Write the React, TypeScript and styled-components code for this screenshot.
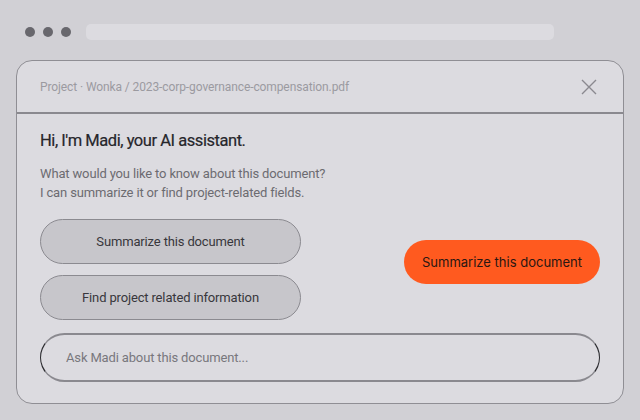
import React from "react";
import styled, { createGlobalStyle } from "styled-components";

const Global = createGlobalStyle`
  html, body { margin: 0; padding: 0; }
  body {
    background: #d1d0d5;
    font-family: Roboto, "Noto Sans", sans-serif;
    width: 640px;
    height: 420px;
    overflow: hidden;
  }
`;

const Page = styled.div`
  width: 640px;
  height: 420px;
  display: flex;
  flex-direction: column;
  box-sizing: border-box;
  padding: 24px 16px 0;
`;

const BrowserBar = styled.div`
  display: flex;
  align-items: center;
  height: 16px;
  padding-left: 9px;
`;

const Dot = styled.span`
  width: 10px;
  height: 10px;
  border-radius: 50%;
  background: #68676d;
  margin-right: 8px;
`;

const Address = styled.div`
  margin-left: 7px;
  width: 468px;
  height: 16px;
  border-radius: 5px;
  background: #dcdbe0;
`;

const Card = styled.div`
  margin-top: 20px;
  height: 344px;
  box-sizing: border-box;
  border: 1px solid #8f8e94;
  border-radius: 16px;
  background: #dcdbe0;
  display: flex;
  flex-direction: column;
`;

const Header = styled.div`
  height: 51px;
  flex: none;
  display: flex;
  align-items: center;
  justify-content: space-between;
  padding: 0 26px 0 23px;
  border-bottom: 2px solid #8a898f;
`;

const Crumb = styled.span`
  font-size: 12px;
  color: #9b9aa0;
  letter-spacing: -0.1px;
`;

const Close = styled.button`
  border: none;
  background: none;
  padding: 0;
  width: 16px;
  height: 16px;
  display: flex;
  cursor: pointer;
`;

const Body = styled.div`
  flex: 1;
  display: flex;
  flex-direction: column;
  padding: 17px 23px 21px;
`;

const Heading = styled.h1`
  margin: 0;
  font-size: 16.5px;
  line-height: 20px;
  font-weight: 400;
  color: #26262b;
  letter-spacing: -0.45px;
  -webkit-text-stroke: 0.2px #26262b;
`;

const Intro = styled.p`
  margin: 13px 0 0;
  font-size: 13px;
  line-height: 19px;
  color: #6c6b71;
  letter-spacing: -0.15px;
`;

const Actions = styled.div`
  margin-top: 17px;
  display: flex;
  align-items: center;
  justify-content: space-between;
`;

const Choices = styled.div`
  display: flex;
  flex-direction: column;
  gap: 11px;
`;

const Choice = styled.button`
  width: 261px;
  height: 45px;
  box-sizing: border-box;
  border: 1px solid #8b8a90;
  border-radius: 23px;
  background: #c7c6cb;
  font-family: inherit;
  font-size: 13px;
  color: #38373c;
  letter-spacing: -0.15px;
  cursor: pointer;
`;

const Primary = styled.button`
  width: 196px;
  height: 44px;
  margin-top: -16px;
  border: none;
  border-radius: 22px;
  background: #ff5a1f;
  font-family: Inter, sans-serif;
  font-size: 13px;
  color: #2a1712;
  cursor: pointer;
`;

const Ask = styled.div`
  margin-top: 13px;
  height: 49px;
  box-sizing: border-box;
  border: 1px solid #8a898f;
  border-left-color: #2a2a2e;
  border-right-color: #2a2a2e;
  border-top-width: 2px;
  border-bottom-width: 2px;
  border-radius: 25px;
  display: flex;
  align-items: center;
  padding-left: 23px;
`;

const AskInput = styled.input`
  flex: 1;
  border: none;
  background: transparent;
  outline: none;
  font-family: inherit;
  font-size: 13px;
  color: #2c2c31;
  letter-spacing: -0.15px;
  &::placeholder { color: #78777d; }
`;

export default function App() {
  return (
    <>
      <Global />
      <Page>
        <BrowserBar>
          <Dot />
          <Dot />
          <Dot />
          <Address />
        </BrowserBar>
        <Card>
          <Header>
            <Crumb>Project · Wonka / 2023-corp-governance-compensation.pdf</Crumb>
            <Close aria-label="Close">
              <svg width="16" height="16" viewBox="0 0 16 16">
                <path d="M1 1L15 15M15 1L1 15" stroke="#8a898f" strokeWidth="1.4" fill="none" />
              </svg>
            </Close>
          </Header>
          <Body>
            <Heading>Hi, I'm Madi, your AI assistant.</Heading>
            <Intro>
              What would you like to know about this document?
              <br />
              I can summarize it or find project-related fields.
            </Intro>
            <Actions>
              <Choices>
                <Choice>Summarize this document</Choice>
                <Choice>Find project related information</Choice>
              </Choices>
              <Primary>Summarize this document</Primary>
            </Actions>
            <Ask>
              <AskInput placeholder="Ask Madi about this document..." />
            </Ask>
          </Body>
        </Card>
      </Page>
    </>
  );
}
